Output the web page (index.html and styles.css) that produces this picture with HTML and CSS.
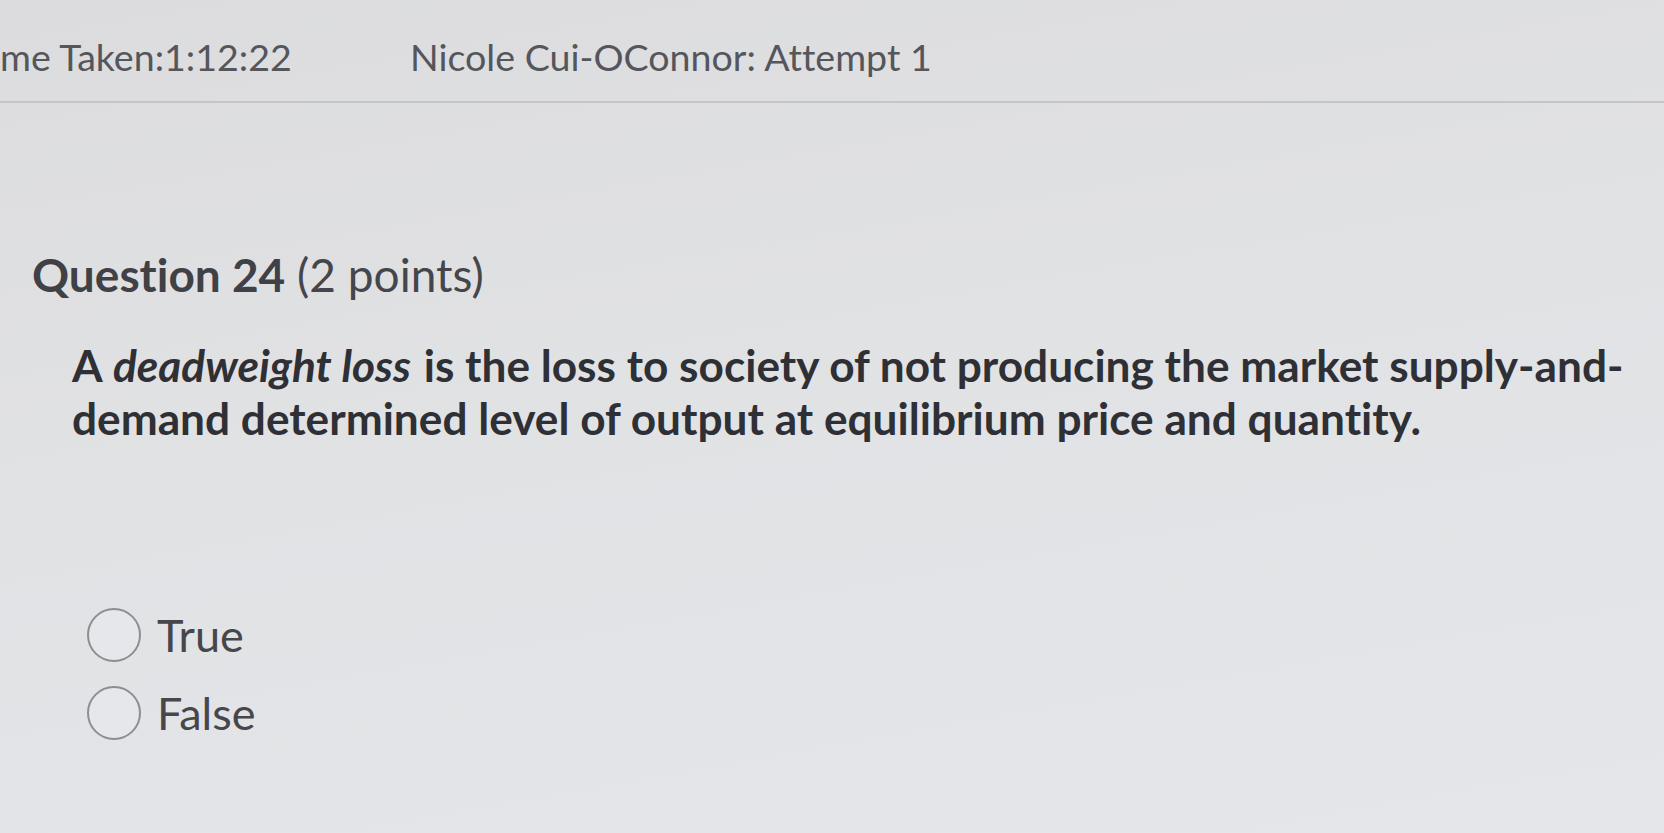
FILE: index.html
```html
<!DOCTYPE html>
<html>
<head>
<meta charset="utf-8">
<link rel="stylesheet" href="styles.css">
</head>
<body>
<div class="page">
  <header class="topbar">
    <span class="time">me Taken:1:12:22</span>
    <span class="attempt">Nicole Cui-OConnor: Attempt 1</span>
  </header>
  <main class="question">
    <h2 class="qtitle"><span class="qnum">Question 24</span> (2 points)</h2>
    <p class="qtext">A <em>deadweight loss</em> is the loss to society of not producing the market supply-and-demand determined level of output at equilibrium price and quantity.</p>
    <div class="options">
      <label class="option"><span class="radio"></span><span class="label">True</span></label>
      <label class="option"><span class="radio"></span><span class="label">False</span></label>
    </div>
  </main>
</div>
</body>
</html>
```
FILE: styles.css
```css
html, body {
  margin: 0;
  padding: 0;
}
body {
  width: 1664px;
  height: 833px;
  overflow: hidden;
  font-family: Lato, "Open Sans", sans-serif;
  font-variant-ligatures: none;
  background: linear-gradient(170deg, #dcdcde 0%, #e1e2e4 45%, #e5e6ea 100%);
}
.page {
  height: 833px;
}
.topbar {
  height: 103px;
  border-bottom: 2px solid #c4c5c8;
  display: flex;
  align-items: flex-start;
  box-sizing: border-box;
  padding-top: 31px;
  font-size: 37.6px;
  color: #55565b;
  line-height: 52px;
}
.time {
  width: 410px;
}
.question {
  padding: 0 0 0 32px;
}
.qtitle {
  margin: 145px 0 0 0;
  font-size: 46px;
  font-weight: 400;
  color: #45464b;
  line-height: 54px;
}
.qnum {
  font-weight: 700;
  color: #404146;
}
.qtext {
  margin: 36px 0 0 40px;
  width: 1580px;
  font-size: 44.2px;
  font-weight: 700;
  color: #2f3035;
  line-height: 53px;
}
.qtext em {
  font-style: italic;
  margin: 0 2px 0 1px;
}
.options {
  margin: 164px 0 0 55px;
  display: flex;
  flex-direction: column;
  gap: 24px;
}
.option {
  display: flex;
  align-items: center;
  gap: 16px;
}
.radio {
  width: 50px;
  height: 50px;
  border: 2px solid #8d8e92;
  border-radius: 50%;
  background: #e6e7ea;
}
.label {
  font-size: 45px;
  color: #46474c;
  line-height: 52px;
}
```
